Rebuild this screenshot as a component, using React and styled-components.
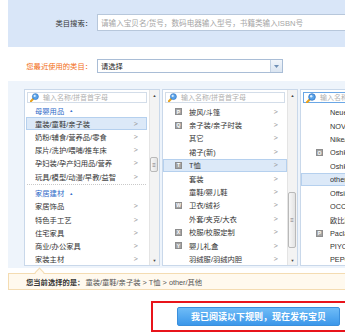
import React from "react";
import styled, { createGlobalStyle } from "styled-components";

const GlobalStyle = createGlobalStyle`
  body {
    margin: 0;
    background: #fff;
    overflow: hidden;
    font-family: "Liberation Sans", "Noto Sans CJK SC", sans-serif;
    font-size: 7.3px;
    color: #333;
  }
`;

// magnifier glass used in every column search box
function Magnifier({ size = 9 }) {
  return (
    <svg width={size} height={size} viewBox="0 0 10 10">
      <path d="M1 9.2 L3.6 6.4" stroke="#e8a21c" strokeWidth="2.2" strokeLinecap="round" />
      <circle cx="6" cy="4" r="3.3" fill="#5aa3e8" stroke="#2f74c4" strokeWidth="0.8" />
      <circle cx="5.2" cy="3.2" r="1.2" fill="#d6ecff" />
    </svg>
  );
}

const col1 = [
  { head: "母婴用品" },
  { text: "童装/童鞋/亲子装", active: true },
  { text: "奶粉/辅食/营养品/零食" },
  { text: "尿片/洗护/喂哺/推车床" },
  { text: "孕妇装/孕产妇用品/营养" },
  { text: "玩具/模型/动漫/早教/益智" },
  { sep: true },
  { head: "家居建材" },
  { text: "家居饰品" },
  { text: "特色手工艺" },
  { text: "住宅家具" },
  { text: "商业/办公家具" },
  { text: "家装主材" },
];

const col2 = [
  { letter: "P", text: "披风/斗篷" },
  { letter: "Q", text: "亲子装/亲子时装" },
  { text: "其它" },
  { text: "裙子(新)" },
  { letter: "T", text: "T恤", active: true },
  { text: "套装" },
  { text: "童鞋/婴儿鞋" },
  { letter: "W", text: "卫衣/绒衫" },
  { text: "外套/夹克/大衣" },
  { letter: "X", text: "校服/校服定制" },
  { letter: "Y", text: "婴儿礼盒" },
  { text: "羽绒服/羽绒内胆" },
];

const col3 = [
  { text: "Neuer" },
  { text: "NOVA" },
  { text: "Nike/耐" },
  { letter: "O", text: "Oshko" },
  { text: "Oshko" },
  { text: "other/", active: true },
  { text: "Offsid" },
  { text: "OCChe" },
  { text: "欧比跑" },
  { letter: "P", text: "Paclar" },
  { text: "PIYOR" },
  { text: "PEPCO" },
];

function App() {
  return (
    <Page>
      <GlobalStyle />
      <SearchPanel>
        <FieldLabel>类目搜索：</FieldLabel>
        <SearchInput>请输入宝贝名/货号，数码电器输入型号，书籍类输入ISBN号</SearchInput>
      </SearchPanel>

      <RecentRow>
        <FieldLabel $accent>您最近使用的类目：</FieldLabel>
        <Select>
          <SelectText>请选择</SelectText>
          <SelectArrow>
            <svg width="5" height="3" viewBox="0 0 5 3">
              <path d="M0 0 H5 L2.5 3 Z" fill="#6f8fb5" />
            </svg>
          </SelectArrow>
        </Select>
      </RecentRow>

      <CategoryPanel>
        <Column>
          <ColumnBody>
            <ColSearch>
              <Magnifier />
              <SearchHint>输入名称/拼音首字母</SearchHint>
            </ColSearch>
            <List $top={1}>
              {col1.map((item, i) =>
                item.sep ? (
                  <Separator key={i} />
                ) : item.head ? (
                  <GroupHead key={i}>
                    {item.head}
                    <UpMark>▲</UpMark>
                  </GroupHead>
                ) : (
                  <Row key={i} $active={item.active} $pad={8} $h={13.2}>
                    <RowText>{item.text}</RowText>
                    <Chevron>&gt;</Chevron>
                  </Row>
                )
              )}
            </List>
          </ColumnBody>
          <Scrollbar $thumbTop={67} $thumbHeight={15} />
        </Column>

        <Column>
          <ColumnBody>
            <ColSearch>
              <Magnifier />
              <SearchHint>输入名称/拼音首字母</SearchHint>
            </ColSearch>
            <List $top={2}>
              {col2.map((item, i) => (
                <Row key={i} $active={item.active} $pad={11} $flush>
                  <LetterSlot>{item.letter && <Letter>{item.letter}</Letter>}</LetterSlot>
                  <RowText>{item.text}</RowText>
                  <Chevron>&gt;</Chevron>
                </Row>
              ))}
            </List>
          </ColumnBody>
          <Scrollbar $thumbTop={102} $thumbHeight={56} />
        </Column>

        <Column $last>
          <ColumnBody>
            <ColSearch $focus>
              <Magnifier size={10} />
              <SearchHint>输入名称</SearchHint>
            </ColSearch>
            <List $top={3}>
              {col3.map((item, i) => (
                <Row key={i} $active={item.active} $pad={14} $flush>
                  <LetterSlot>{item.letter && <Letter>{item.letter}</Letter>}</LetterSlot>
                  <RowText>{item.text}</RowText>
                </Row>
              ))}
            </List>
          </ColumnBody>
        </Column>
      </CategoryPanel>

      <SelectionBar>
        <Caret />
        <strong>您当前选择的是：</strong>
        <span>童装/童鞋/亲子装 &gt; T恤 &gt; other/其他</span>
      </SelectionBar>

      <PublishBox>
        <PublishButton>我已阅读以下规则，现在发布宝贝</PublishButton>
      </PublishBox>
    </Page>
  );
}

const Page = styled.div`
  width: 345px;
  overflow: hidden;
`;

const SearchPanel = styled.div`
  margin-left: 8px;
  height: 47px;
  padding-bottom: 2px;
  box-sizing: border-box;
  background: #d9e6f8;
  display: flex;
  align-items: center;
  overflow: hidden;
`;

const FieldLabel = styled.div`
  width: 84px;
  margin-right: 5px;
  flex-shrink: 0;
  text-align: right;
  color: ${({ $accent }) => ($accent ? "#f26b12" : "#333")};
  white-space: nowrap;
`;

const SearchInput = styled.div`
  width: 300px;
  flex-shrink: 0;
  height: 17px;
  box-sizing: border-box;
  border: 1px solid #b7c7db;
  background: #fff;
  color: #a5a5a5;
  font-size: 7.6px;
  padding-left: 3px;
  display: flex;
  align-items: center;
  white-space: nowrap;
`;

const RecentRow = styled.div`
  margin: 12px 0 0 8px;
  height: 14px;
  display: flex;
  align-items: center;
`;

const Select = styled.div`
  width: 186px;
  height: 14px;
  box-sizing: border-box;
  border: 1px solid #a9bdd6;
  background: #fff;
  display: flex;
`;

const SelectText = styled.div`
  flex: 1;
  padding-left: 3px;
  display: flex;
  align-items: center;
  color: #222;
`;

const SelectArrow = styled.div`
  width: 11px;
  border-left: 1px solid #c3d2e4;
  background: linear-gradient(#f1f5fa, #dbe5f1);
  display: flex;
  align-items: center;
  justify-content: center;
`;

const CategoryPanel = styled.div`
  margin: 8px 0 0 8px;
  padding: 8px 0 2px 16px;
  background: #eef4fb;
  display: flex;
  gap: 2px;
  overflow: hidden;
`;

const Column = styled.div`
  width: 136px;
  flex-shrink: 0;
  height: 177px;
  box-sizing: border-box;
  border: 1px solid #c9d8ea;
  border-right-color: ${({ $last }) => ($last ? "transparent" : "#c9d8ea")};
  background: #fff;
  display: flex;
  overflow: hidden;
`;

const ColumnBody = styled.div`
  flex: 1;
  min-width: 0;
  display: flex;
  flex-direction: column;
`;

const ColSearch = styled.div`
  margin: 2px 2px 0 2px;
  height: 11px;
  flex-shrink: 0;
  box-sizing: border-box;
  border: 1px solid ${({ $focus }) => ($focus ? "#6aa7e6" : "#d3dde9")};
  display: flex;
  align-items: center;
  gap: 4px;
  padding-left: 2px;
  white-space: nowrap;
`;

const SearchHint = styled.span`
  color: #b0b0b0;
  font-size: 7px;
  line-height: 1;
`;

const List = styled.div`
  padding-top: ${({ $top }) => $top}px;
  display: flex;
  flex-direction: column;
`;

const Row = styled.div`
  height: ${({ $h = 13.4 }) => $h}px;
  flex-shrink: 0;
  box-sizing: border-box;
  margin: ${({ $flush }) => ($flush ? "0" : "0 2px 0 1px")};
  padding: 0 7px 0 ${({ $pad }) => $pad}px;
  display: flex;
  align-items: center;
  white-space: nowrap;
  background: ${({ $active }) => ($active ? "#dce9f8" : "transparent")};
  border: 1px solid ${({ $active }) => ($active ? "#b5d0ee" : "transparent")};
  color: #333;
`;

const RowText = styled.span`
  flex: 1;
  overflow: hidden;
`;

const Chevron = styled.span`
  color: #9a9a9a;
  font-family: "DejaVu Sans", sans-serif;
  font-size: 7px;
  transform: scaleX(0.8);
`;

const LetterSlot = styled.span`
  width: 14px;
  flex-shrink: 0;
  display: flex;
`;

const Letter = styled.span`
  width: 7px;
  height: 7px;
  background: #a4a4a4;
  border: 1px solid #8d8d8d;
  box-sizing: border-box;
  color: #fff;
  font-size: 5px;
  font-weight: bold;
  display: flex;
  align-items: center;
  justify-content: center;
`;

const GroupHead = styled.div`
  height: 13.2px;
  flex-shrink: 0;
  padding-left: 10px;
  display: flex;
  align-items: center;
  gap: 5px;
  color: #2f6bc9;
`;

const UpMark = styled.span`
  font-size: 4px;
  color: #3a72cc;
`;

const Separator = styled.div`
  height: 3.5px;
  flex-shrink: 0;
  margin: 1px 3px -1px 2px;
  border-top: 1px dotted #c9c9c9;
  box-sizing: border-box;
`;

function Scrollbar({ $thumbTop, $thumbHeight }) {
  return (
    <Track>
      <ScrollArrow>▲</ScrollArrow>
      <Thumb $top={$thumbTop} $height={$thumbHeight}>≡</Thumb>
      <ScrollArrow $bottom>▼</ScrollArrow>
    </Track>
  );
}

const Track = styled.div`
  width: 9px;
  flex-shrink: 0;
  background: #f3f3f3;
  border-left: 1px solid #e4e4e4;
  display: flex;
  flex-direction: column;
`;

const ScrollArrow = styled.div`
  height: 10px;
  display: flex;
  align-items: center;
  justify-content: center;
  font-size: 4px;
  color: #444;
  margin-top: ${({ $bottom }) => ($bottom ? "auto" : "0")};
`;

const Thumb = styled.div`
  margin: ${({ $top }) => $top - 10}px 1px 0 0;
  height: ${({ $height }) => $height}px;
  box-sizing: border-box;
  border: 1px solid #b9b9b9;
  border-radius: 2px;
  background: linear-gradient(90deg, #f7f7f7, #e3e3e3);
  display: flex;
  align-items: center;
  justify-content: center;
  font-size: 6px;
  color: #777;
`;

const SelectionBar = styled.div`
  position: relative;
  margin: 5px 0 0 8px;
  height: 17px;
  box-sizing: border-box;
  border: 1px solid #f4dcb2;
  border-right: none;
  background: #fff9ee;
  padding-left: 17px;
  display: flex;
  align-items: center;
  gap: 1px;
  white-space: nowrap;
  color: #555;
  strong {
    color: #333;
  }
`;

const Caret = styled.span`
  position: absolute;
  left: 27px;
  top: -5px;
  width: 6px;
  height: 6px;
  background: #fff9ee;
  border-left: 1px solid #f4dcb2;
  border-top: 1px solid #f4dcb2;
  transform: rotate(45deg);
`;

const PublishBox = styled.div`
  margin: 11px 0 0 151px;
  height: 31px;
  box-sizing: border-box;
  border: 2px solid #e8141b;
  border-right: none;
  padding: 4px 0 0 24px;
`;

const PublishButton = styled.div`
  width: 163px;
  height: 19px;
  border-radius: 2px;
  background: linear-gradient(#6fbcf7, #3b97ea);
  border: 1px solid #3a8fdc;
  box-sizing: border-box;
  color: #fff;
  font-size: 9px;
  font-weight: bold;
  display: flex;
  align-items: center;
  justify-content: center;
  white-space: nowrap;
`;

export default App;
